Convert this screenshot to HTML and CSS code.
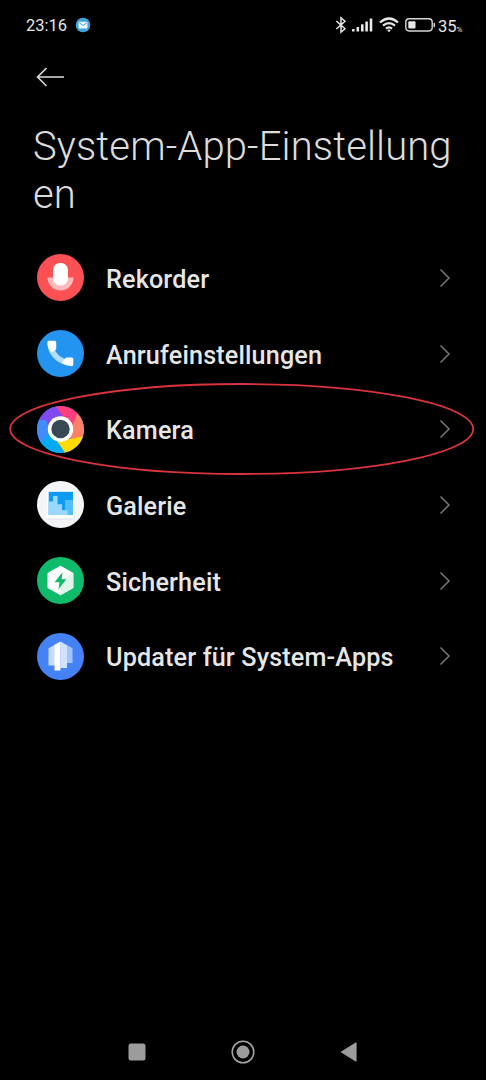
FILE: index.html
```html
<!DOCTYPE html>
<html lang="de">
<head>
<meta charset="utf-8">
<title>System-App-Einstellungen</title>
<link rel="stylesheet" href="styles.css">
</head>
<body>
<div class="screen">
  <header class="status">
    <span class="clock">23:16</span>
    <svg class="mail" width="16" height="16" viewBox="0 0 16 16"><circle cx="8" cy="8" r="7.3" fill="#3da5d9"/><rect x="3.600" y="4.700" width="8.800" height="6.800" rx="1" fill="#f2fbff"/><path d="M4.200 5.800 8 8.500l3.800-2.700" fill="none" stroke="#3da5d9" stroke-width="1"/></svg>
    <svg class="bluetooth" width="12" height="18" viewBox="0 0 12 18"><path d="M1.300 5 10 12.700 6 16.200V1.800L10 5.300 1.300 13" fill="none" stroke="#e8e8e8" stroke-width="1.500"/></svg>
    <svg class="signal" width="21" height="14" viewBox="0 0 21 14" fill="#e8e8e8"><rect x="0" y="11" width="2.600" height="2.500" rx=".5"/><rect x="4.500" y="9" width="2.600" height="4.500" rx=".5"/><rect x="9" y="6.300" width="2.600" height="7.200" rx=".5"/><rect x="13.300" y="3.500" width="2.600" height="10" rx=".5"/><rect x="17.700" y=".5" width="2.600" height="13" rx=".5"/></svg>
    <svg class="wifi" width="20" height="16" viewBox="0 0 20 16"><g fill="none" stroke="#e8e8e8" stroke-width="2.200"><path d="M1 5.500Q10-2.500 19 5.500"/><path d="M4 8.700Q10 3.500 16 8.700"/><path d="M6.900 11.700Q10 9.100 13.100 11.700"/></g><path d="M8.100 13.100Q10 11.800 11.900 13.100L10 15.200Z" fill="#e8e8e8"/></svg>
    <svg class="battery" width="31" height="14" viewBox="0 0 31 14"><rect x=".8" y=".8" width="26.400" height="12.200" rx="3.400" fill="none" stroke="#d8d8d8" stroke-width="1.400"/><rect x="3.300" y="3.300" width="7.200" height="7.200" rx="1" fill="#e8e8e8"/><rect x="28.500" y="4.700" width="1.500" height="4.500" rx=".7" fill="#d8d8d8"/></svg>
    <span class="level">35<small>%</small></span>
  </header>

  <div class="toolbar">
    <svg width="30" height="20" viewBox="0 0 30 20"><path d="M29 10H2.500M11.500 1 2.500 10 11.500 19" fill="none" stroke="#dcdcdc" stroke-width="1.600"/></svg>
  </div>
  <h1 class="title">System-App-Einstellungen</h1>

  <main class="list">
    <div class="row">
      <svg class="icon" viewBox="0 0 47 47"><circle cx="23.500" cy="23.500" r="23.500" fill="#fb5155"/><path d="M10.500 23.500h26a13 13 0 0 1-26 0Z" fill="#fdb9bb"/><rect x="16" y="9" width="15" height="22.500" rx="7" fill="#fff"/></svg>
      <span class="label">Rekorder</span>
      <svg class="chevron" viewBox="0 0 12 20"><path d="m1.500 1.500 8.500 8.500-8.500 8.500"/></svg>
    </div>
    <div class="row">
      <svg class="icon" viewBox="0 0 47 47"><circle cx="23.500" cy="23.500" r="23.500" fill="#2395f1"/><path d="M10.500 14C11 26 22 35.500 35 36l-8-7.500Q20 25.500 17.500 19Z" fill="#b4dcfb"/><path d="M12 10.700h5.700q1.500 0 1.500 1.500v6.300q0 1-.8 1.500l-4.400 2.500Q10.500 17 10.300 12.400q0-1.700 1.700-1.700ZM24.700 33l3.500-4.800q.6-.8 1.600-.8h5q1.500 0 1.500 1.500v5.700q0 1.700-1.700 1.600-5.400-.4-9.900-3.200Z" fill="#fff"/></svg>
      <span class="label">Anrufeinstellungen</span>
      <svg class="chevron" viewBox="0 0 12 20"><path d="m1.500 1.500 8.500 8.500-8.500 8.500"/></svg>
    </div>
    <div class="row">
      <svg class="icon" viewBox="0 0 47 47"><defs><clipPath id="lens"><circle cx="23.500" cy="23.500" r="23.500"/></clipPath></defs><g clip-path="url(#lens)"><rect width="47" height="47" fill="#418cfb"/><path d="M3-1H19L29 14 11 22 4 14-1 13Z" fill="#804af1"/><path d="M18-1H47L40 9 36 22 27 12Z" fill="#ff3e7e"/><path d="M41 6 48 12V32L33 34 34 23Z" fill="#ff8168"/><path d="M48 30 33 33 18 34 28 48H48Z" fill="#ffdc00"/><path d="M14 25 3 37V48H29L18 32Z" fill="#00abfb"/><path d="M-1 14H9L14 25 3 38-1 37Z" fill="#418cfb"/></g><circle cx="23.500" cy="23" r="12.700" fill="#fff"/><circle cx="23.500" cy="23" r="9.200" fill="#374954"/></svg>
      <span class="label">Kamera</span>
      <svg class="chevron" viewBox="0 0 12 20"><path d="m1.500 1.500 8.500 8.500-8.500 8.500"/></svg>
      <svg class="marker" width="466" height="92" viewBox="0 0 466 92"><ellipse cx="232.700" cy="46" rx="231.500" ry="45" fill="none" stroke="#d9333c" stroke-width="1.800"/></svg>
    </div>
    <div class="row">
      <svg class="icon" viewBox="0 0 47 47"><circle cx="23.500" cy="23.500" r="23.500" fill="#f3f5f7"/><rect x="10" y="10" width="28" height="28.500" rx="1" fill="#dde2e7"/><rect x="9.700" y="9" width="27.800" height="28.500" rx="1" fill="#fff"/><path d="M11.700 10.800h24.300v23.200H11.700Z" fill="#0e9bf3"/><path d="M20 23h5v6h3V19h8v15H20Z" fill="#55bcfa"/><path d="M11.700 20.500H16V15h4.500v8.500H25v5.700h5.500V34H11.700Z" fill="#99d7ff"/></svg>
      <span class="label">Galerie</span>
      <svg class="chevron" viewBox="0 0 12 20"><path d="m1.500 1.500 8.500 8.500-8.500 8.500"/></svg>
    </div>
    <div class="row">
      <svg class="icon" viewBox="0 0 47 47"><circle cx="23.500" cy="23.500" r="23.500" fill="#0fba6b"/><path d="M23.500 9.800 35.500 16.600V30.400L23.500 37.200 11.500 30.400V16.600Z" fill="#fff" stroke="#fff" stroke-width="2" stroke-linejoin="round"/><path d="M23.500 23.500 36 16.500V30.500L23.500 37.800Z" fill="#dff5ea"/><path d="M25.600 15.300 17.500 25.300h5l-1.200 7.200 8-10.300h-4.700Z" fill="#0fba6b"/></svg>
      <span class="label">Sicherheit</span>
      <svg class="chevron" viewBox="0 0 12 20"><path d="m1.500 1.500 8.500 8.500-8.500 8.500"/></svg>
    </div>
    <div class="row">
      <svg class="icon" viewBox="0 0 47 47"><circle cx="23.500" cy="23.500" r="23.500" fill="#4482f6"/><path d="M11.500 15.200 18 11.800V32.500H11.500Z" fill="#c6daff"/><path d="m29 11.500 6.500 3.700V30H29Z" fill="#a3c3fd"/><path d="m23.500 8.500 6.500 3.700V35h-6.500Z" fill="#d1e1ff"/><path d="M17.500 11.700 23.500 8.500V37.500h-6Z" fill="#fff"/></svg>
      <span class="label">Updater für System-Apps</span>
      <svg class="chevron" viewBox="0 0 12 20"><path d="m1.500 1.500 8.500 8.500-8.500 8.500"/></svg>
    </div>
  </main>

  <nav class="nav">
    <svg width="24" height="24" viewBox="0 0 24 24"><rect x="3.500" y="3.500" width="17" height="17" rx="2.500" fill="#9c9c9c"/></svg>
    <svg width="24" height="24" viewBox="0 0 24 24"><circle cx="12" cy="12" r="10.800" fill="none" stroke="#a4a4a4" stroke-width="1.500"/><circle cx="12" cy="12" r="6.500" fill="#9c9c9c"/></svg>
    <svg width="24" height="24" viewBox="0 0 24 24"><path d="M4.500 12 19 3V21Z" fill="#9c9c9c" stroke="#9c9c9c" stroke-width="1.200" stroke-linejoin="round"/></svg>
  </nav>
</div>
</body>
</html>
```
FILE: styles.css
```css
* {
  box-sizing: border-box;
}

body {
  margin: 0;
  background: #000;
  color: #e6e6e6;
  font-family: Roboto, "Noto Sans", sans-serif;
}

svg {
  display: block;
  flex: none;
}

.screen {
  display: flex;
  flex-direction: column;
  width: 486px;
  height: 1080px;
  overflow: hidden;
  background: #000;
}

.status {
  display: flex;
  align-items: center;
  height: 50px;
  padding: 0 22px 0 26px;
}

.clock {
  width: 49px;
  padding-top: 2px;
  font-size: 16.500px;
  font-weight: 400;
  line-height: 20px;
}

.bluetooth {
  margin-left: auto;
}

.signal {
  margin-left: 5px;
}

.wifi {
  margin-left: 6px;
}

.battery {
  margin-left: 6px;
}

.level {
  width: 26px;
  margin-left: 2px;
  padding-top: 2px;
  font-size: 16.500px;
  font-weight: 400;
  white-space: nowrap;
}

.level small {
  font-size: 8px;
}

.toolbar {
  height: 72px;
  padding: 17px 35px 0;
}

.title {
  height: 118px;
  margin: 0;
  padding: 1px 30px 0 33px;
  font-size: 40px;
  font-weight: 300;
  line-height: 48px;
  letter-spacing: 0.120px;
  color: #dcdcdc;
  word-break: break-all;
}

.row {
  position: relative;
  display: flex;
  align-items: center;
  height: 75.700px;
  padding: 0 35px 0 37px;
}

.icon {
  width: 47px;
  height: 47px;
}

.label {
  flex: 1;
  padding: 4px 0 0 22px;
  font-size: 25.200px;
  font-weight: 500;
  line-height: 30px;
  letter-spacing: 0.150px;
  white-space: nowrap;
}

.chevron {
  width: 12px;
  height: 20px;
  fill: none;
  stroke: #777;
  stroke-width: 1.500;
}

.marker {
  position: absolute;
  top: -8px;
  left: 9px;
}

.nav {
  display: flex;
  justify-content: space-between;
  margin-top: auto;
  padding: 0 125px 16px;
}
```
